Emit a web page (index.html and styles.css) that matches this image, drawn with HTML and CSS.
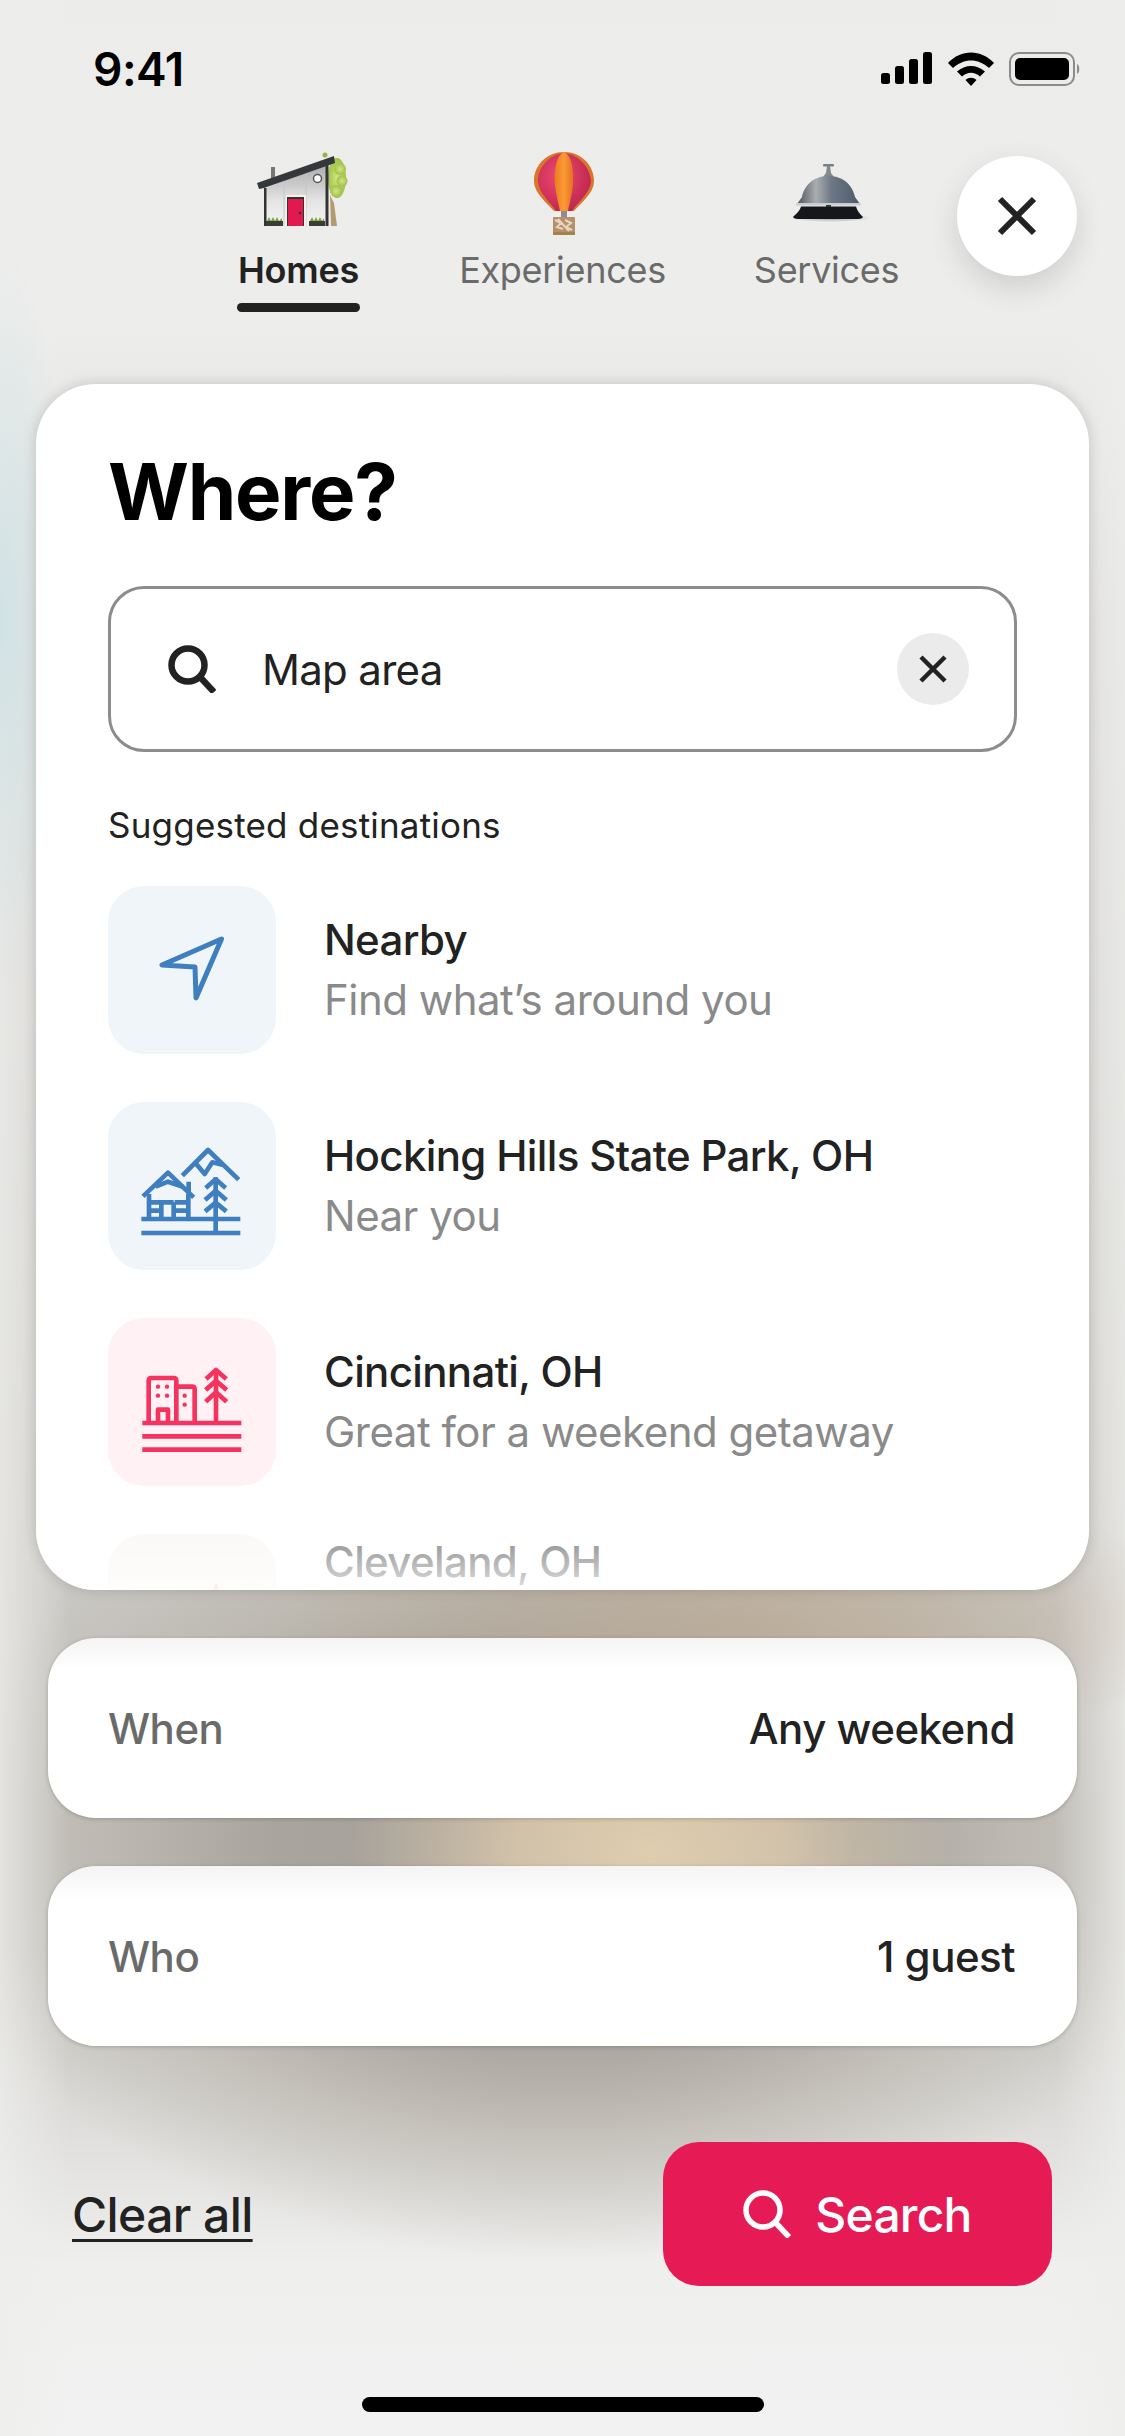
FILE: index.html
```html
<!DOCTYPE html>
<html lang="en">
<head>
<meta charset="utf-8">
<title>Where?</title>
<link rel="stylesheet" href="styles.css">
</head>
<body>
<div class="screen">
  <div class="status">
    <span class="time">9:41</span>
    <div class="status-icons">
      <svg width="52" height="32" viewBox="0 0 52 32"><g fill="#000"><rect x="0" y="21" width="9" height="11" rx="2.5"/><rect x="14" y="14" width="9" height="18" rx="2.5"/><rect x="28" y="7" width="9" height="25" rx="2.5"/><rect x="42" y="0" width="9" height="32" rx="2.5"/></g></svg>
      <svg width="46" height="34" viewBox="0 0 46 34"><path d="M0 11 C13 -3 33 -3 46 11 L41 16 C30 6 16 6 5 16Z M9 19.500 C17 12 29 12 37 19.500 L32 24.500 C26 19.500 20 19.500 14 24.500Z M17.500 28 C21 25 25 25 28.500 28 L23 34Z" fill="#000"/></svg>
      <svg width="72" height="34" viewBox="0 0 72 34"><rect x="1" y="1" width="64" height="32" rx="9" fill="none" stroke="#8b8b8b" stroke-width="2"/><rect x="6" y="6" width="54" height="22" rx="5" fill="#000"/><path d="M68 12 C71 13 71 21 68 22Z" fill="#8b8b8b"/></svg>
    </div>
  </div>

  <nav class="tabs">
    <div class="tab tab-active">
      <svg class="tab-art" viewBox="0 0 120 100">
        <defs>
          <linearGradient id="wall" x1="0" y1="0" x2="0" y2="1"><stop offset="0" stop-color="#a9a9ab"/><stop offset=".6" stop-color="#e4e4e4"/><stop offset="1" stop-color="#f4f4f4"/></linearGradient>
          <radialGradient id="leaf"><stop offset="0" stop-color="#d6e580"/><stop offset="1" stop-color="#9fc24c"/></radialGradient>
        </defs>
        <path d="M91 50 L92 81 L98 81 L95 58Z" fill="#b59a70"/>
        <g fill="url(#leaf)"><ellipse cx="98" cy="33" rx="9" ry="20"/><circle cx="101" cy="24" r="6"/><circle cx="103" cy="36" r="5.500"/><circle cx="97" cy="46" r="6"/></g>
        <circle cx="86" cy="10" r="2.500" fill="#8fb748"/>
        <rect x="32" y="22" width="4" height="12" fill="#777"/>
        <path d="M25 44 L89 18 L89 81 L25 81Z" fill="url(#wall)"/>
        <path d="M45 36 V81 M67 27 V81" stroke="#c6c6c6" stroke-width="1"/>
        <rect x="25" y="43" width="2.500" height="38" fill="#333"/>
        <rect x="86.500" y="18" width="3" height="63" fill="#333"/>
        <path d="M18 38 L95 11 L96 18 L25 43 L20 44Z" fill="#35383b"/>
        <rect x="47" y="50" width="20" height="31" fill="#f4f1ea"/>
        <rect x="48" y="52" width="17" height="29" fill="#333"/>
        <rect x="49" y="54" width="15" height="27" fill="#e01a4f"/>
        <circle cx="61" cy="68" r="1.200" fill="#222"/>
        <circle cx="78.500" cy="33.500" r="4" fill="#fff" stroke="#555" stroke-width="1.500"/>
        <rect x="27" y="76" width="17" height="5" fill="#3a3d35"/>
        <rect x="70" y="76" width="16" height="5" fill="#3a3d35"/>
        <path d="M28 76 L30 72 L32 76 L34 72 L36 76 L38 72 L40 76 L43 73 V76Z M71 76 L73 72 L75 76 L77 72 L79 76 L81 72 L83 76 L85 73 V76Z" fill="#79a33f"/>
      </svg>
      <span class="tab-label">Homes</span>
      <span class="tab-bar"></span>
    </div>
    <div class="tab">
      <svg class="tab-art" viewBox="0 0 120 100">
        <defs>
          <radialGradient id="red" cx=".4" cy=".4" r=".7"><stop offset="0" stop-color="#ee4a70"/><stop offset="1" stop-color="#b9224c"/></radialGradient>
          <linearGradient id="org" x1="0" y1="0" x2="1" y2="0"><stop offset="0" stop-color="#ec7d20"/><stop offset=".5" stop-color="#fb9a35"/><stop offset="1" stop-color="#e4711f"/></linearGradient>
        </defs>
        <path d="M61 7 C78 7 91 20 91 36 C91 48 78 58 71 66 L51 66 C44 58 31 48 31 36 C31 20 44 7 61 7Z" fill="#d9762a"/>
        <path d="M61 8 C74 9 87 21 88 36 C88 47 75 57 69 66 L53 66 C47 57 35 47 35 36 C35 21 48 9 61 8Z" fill="url(#red)"/>
        <path d="M61 7 C53 10 51 26 52 40 C53 50 56 60 57 66 L65 66 C66 60 69 50 70 40 C71 26 69 10 61 7Z" fill="url(#org)"/>
        <path d="M52 66 L70 66 L68 72 L53 72Z" fill="#f2eee8"/>
        <rect x="58" y="66" width="6" height="7" fill="#8d8d8d"/>
        <rect x="50" y="72" width="22" height="18" rx="1" fill="#b78f6c"/>
        <path d="M52 75 L58 78 L54 82 L60 84 M62 75 L68 78 L63 82 L69 85 M55 74 L66 86" stroke="#e8d5bd" stroke-width="2" fill="none"/>
        <rect x="50" y="87" width="22" height="3" fill="#a58248"/>
      </svg>
      <span class="tab-label">Experiences</span>
    </div>
    <div class="tab">
      <svg class="tab-art" viewBox="0 0 120 100">
        <defs>
          <linearGradient id="dome" x1="0" y1="0" x2="1" y2="0"><stop offset="0" stop-color="#4f555d"/><stop offset=".3" stop-color="#a9adb2"/><stop offset=".55" stop-color="#6d7884"/><stop offset="1" stop-color="#4b5a6b"/></linearGradient>
          <radialGradient id="bellshadow"><stop offset="0" stop-color="#000" stop-opacity=".35"/><stop offset="1" stop-color="#000" stop-opacity="0"/></radialGradient>
        </defs>
        <ellipse cx="64" cy="73" rx="40" ry="4" fill="url(#bellshadow)"/>
        <rect x="56" y="19" width="11" height="2.500" rx="1" fill="#7c7f83"/>
        <path d="M60 21 H63 L64 28 L67 32 H56 L59 28Z" fill="#85888c"/>
        <path d="M61.500 31 C78 31 86 42 88 52 L93 59 H30 L35 52 C37 42 45 31 61.500 31Z" fill="url(#dome)"/>
        <rect x="29" y="58" width="65" height="2.500" rx="1" fill="#c9cdd1"/>
        <path d="M34 61.500 H89 C90 66 93 69 96 72 C95 74 92 74 88 74 H34 C30 74 27 74 26 72 C29 69 33 66 34 61.500Z" fill="#15171a"/>
        <rect x="59" y="60" width="5" height="2" fill="#333"/>
      </svg>
      <span class="tab-label">Services</span>
    </div>
    <button class="close-btn" aria-label="Close">
      <svg width="42" height="42" viewBox="0 0 42 42"><path d="M4 4 L38 38 M38 4 L4 38" stroke="#222" stroke-width="6" fill="none"/></svg>
    </button>
  </nav>

  <section class="where-card">
    <h1 class="where-title">Where?</h1>
    <div class="where-input">
      <svg class="input-search" width="48" height="48" viewBox="0 0 48 48"><circle cx="20" cy="20" r="16.500" fill="none" stroke="#222" stroke-width="6.500"/><path d="M32 32 L46 47" stroke="#222" stroke-width="6.500" fill="none"/></svg>
      <span class="input-text">Map area</span>
      <span class="input-clear"><svg width="30" height="30" viewBox="0 0 30 30"><path d="M3 3 L27 27 M27 3 L3 27" stroke="#222" stroke-width="4.500" fill="none"/></svg></span>
    </div>
    <div class="suggested">Suggested destinations</div>
    <div class="dest-list">
      <div class="dest">
        <span class="dest-tile tile-blue">
          <svg width="168" height="168" viewBox="0 0 168 168"><path d="M113.500 53 L54 79 L87 81 L88 112Z" fill="none" stroke="#3f7fc0" stroke-width="5" stroke-linejoin="round"/></svg>
        </span>
        <div class="dest-text"><div class="dest-name">Nearby</div><div class="dest-sub">Find what’s around you</div></div>
      </div>
      <div class="dest">
        <span class="dest-tile tile-blue">
          <svg width="168" height="168" viewBox="55 64 504 504"><g fill="none" stroke="#3f7fc0" stroke-width="14" stroke-linejoin="round">
            <path d="M155 415 H452 M155 457 H452 M378 290 V457"/>
            <path d="M278 285 L355 208 L447 297"/>
            <path d="M318 248 L345 280 L368 245 L398 252"/>
            <path d="M348 322 L378 296 L408 322 M346 358 L378 330 L410 358 M346 392 L378 366 L410 392"/>
            <path d="M160 347 L235 276 L312 350"/>
            <path d="M198 318 L235 303 L280 318 M297 303 V335"/>
            <path d="M178 340 V412 M296 340 V412 M172 365 H215 M255 365 H302 M172 390 H215 M255 390 H302 M215 365 V412 M252 365 V412 M215 365 H252"/>
          </g></svg>
        </span>
        <div class="dest-text"><div class="dest-name">Hocking Hills State Park, OH</div><div class="dest-sub">Near you</div></div>
      </div>
      <div class="dest">
        <span class="dest-tile tile-pink">
          <svg width="168" height="168" viewBox="55 52 504 504"><g fill="none" stroke="#f5335f" stroke-width="14" stroke-linejoin="round">
            <path d="M158 367 H455 M158 407 H455 M158 447 H455"/>
            <path d="M177 367 V240 Q177 232 185 232 H252 Q260 232 260 240 V367"/>
            <path d="M260 258 H307 Q315 258 315 266 V367"/>
            <path d="M205 367 V327 H235 V367"/>
            <path d="M379 205 V367"/>
            <path d="M349 235 L379 208 L410 235 M348 268 L379 240 L411 268 M348 303 L379 275 L411 303"/>
          </g><g fill="#f5335f"><circle cx="205" cy="258" r="6.500"/><circle cx="232" cy="258" r="6.500"/><circle cx="205" cy="285" r="6.500"/><circle cx="232" cy="285" r="6.500"/><circle cx="285" cy="285" r="6.500"/><circle cx="285" cy="312" r="6.500"/></g></svg>
        </span>
        <div class="dest-text"><div class="dest-name">Cincinnati, OH</div><div class="dest-sub">Great for a weekend getaway</div></div>
      </div>
      <div class="dest dest-cut">
        <span class="dest-tile tile-sand">
          <svg width="168" height="168" viewBox="0 0 168 168"><path d="M104 58 L108 48 L112 58Z" fill="#cdb9ac"/></svg>
        </span>
        <div class="dest-text"><div class="dest-name">Cleveland, OH</div></div>
      </div>
    </div>
    <div class="where-fade"></div>
  </section>

  <div class="field"><span class="field-label">When</span><span class="field-value">Any weekend</span></div>
  <div class="field"><span class="field-label">Who</span><span class="field-value">1 guest</span></div>

  <footer class="actions">
    <a class="clear-all">Clear all</a>
    <button class="search-btn">
      <svg width="48" height="48" viewBox="0 0 48 48"><circle cx="20" cy="20" r="17" fill="none" stroke="#fff" stroke-width="5.500"/><path d="M32 32 L46 47" stroke="#fff" stroke-width="5.500" fill="none"/></svg>
      <span>Search</span>
    </button>
  </footer>
  <div class="home-wrap"><span class="home-bar"></span></div>
</div>
</body>
</html>
```

FILE: styles.css
```css
* { box-sizing: border-box; }
html, body { margin: 0; padding: 0; }
body { width: 1125px; height: 2436px; overflow: hidden; font-family: Inter, "Noto Sans", sans-serif; color: #222; }

.screen {
  position: relative;
  width: 1125px;
  height: 2436px;
  overflow: hidden;
  display: flex;
  flex-direction: column;
  background:
    radial-gradient(ellipse 300px 200px at 650px 1850px, #dfcdaf 0%, rgba(223,205,175,.75) 45%, rgba(223,205,175,0) 100%),
    radial-gradient(ellipse 500px 130px at 750px 1620px, rgba(190,170,145,.6) 0%, rgba(190,170,145,0) 100%),
    radial-gradient(ellipse 70px 380px at 0px 620px, rgba(205,225,228,.85) 0%, rgba(205,225,228,0) 100%),
    linear-gradient(90deg, rgba(238,238,236,.75) 0, rgba(238,238,236,0) 70px, rgba(238,238,236,0) 1055px, rgba(238,238,236,.75) 1125px),
    radial-gradient(ellipse 640px 410px at 560px 1850px, #a49e97 0%, #a9a49d 45%, rgba(180,175,165,.6) 70%, rgba(238,238,238,0) 100%),
    linear-gradient(180deg, #ececeb 0%, #ededec 13%, #dedddb 25%, #d2d1ce 50%, #c9c7c3 68%, #c9c7c3 80%, #efefee 93%, #f2f2f2 100%);
}

/* Status bar */
.status { height: 138px; padding: 52px 44px 0 93px; display: flex; justify-content: space-between; align-items: flex-start; }
.time { font-family: Inter, sans-serif; font-weight: 600; font-size: 46px; line-height: 34px; color: #000; letter-spacing: -0.5px; }
.status-icons { display: flex; gap: 15px; align-items: flex-start; }

/* Tabs */
.tabs { position: relative; height: 246px; display: grid; grid-template-columns: repeat(3, 264px); justify-content: center; align-items: start; padding-top: 7px; }
.tab { display: flex; flex-direction: column; align-items: center; color: #6a6a6a; }
.tab-art { width: 120px; height: 100px; display: block; }
.tab-label { height: 50px; font-size: 36px; line-height: 50px; font-weight: 400; letter-spacing: -0.3px; }
.tab-active { color: #222; }
.tab-active .tab-label { font-weight: 600; letter-spacing: -0.2px; }
.tab-bar { width: 123px; height: 9px; margin-top: 8px; border-radius: 5px; background: #222; }
.close-btn {
  position: absolute; left: 957px; top: 18px; width: 120px; height: 120px; padding: 0;
  border: 0; border-radius: 50%; background: #fff;
  box-shadow: 0 12px 30px rgba(0,0,0,.13);
  display: flex; align-items: center; justify-content: center;
}

/* Where card */
.where-card {
  position: relative;
  margin: 0 36px;
  height: 1206px;
  padding: 66px 72px 0;
  background: #fff;
  border-radius: 60px;
  overflow: hidden;
  box-shadow: 0 0 14px rgba(0,0,0,.16);
  flex: none;
}
.where-title { margin: 0; font-size: 78px; line-height: 84px; font-weight: 700; color: #000; letter-spacing: -1.2px; }
.where-input {
  margin-top: 52px;
  height: 166px;
  border: 3px solid #8c8c8c;
  border-radius: 36px;
  display: flex;
  align-items: center;
  padding: 0 45px 0 57px;
}
.input-search { flex: none; }
.input-text { margin-left: 46px; flex: 1; font-size: 42px; letter-spacing: -0.7px; color: #222; }
.input-clear { width: 72px; height: 72px; border-radius: 50%; background: #ebebeb; display: flex; align-items: center; justify-content: center; }
.suggested { margin-top: 48px; height: 50px; font-size: 35px; line-height: 50px; letter-spacing: 0.2px; color: #222; }
.dest-list { margin-top: 36px; display: flex; flex-direction: column; gap: 48px; }
.dest { display: flex; align-items: center; gap: 48px; height: 168px; flex: none; }
.dest-cut { align-items: flex-start; }
.dest-tile { width: 168px; height: 168px; border-radius: 36px; flex: none; display: block; }
.dest-tile svg { display: block; }
.tile-blue { background: #f0f5fa; }
.tile-pink { background: #fff1f4; }
.tile-sand { background: #f7f3ef; }
.dest-name { font-size: 42px; line-height: 56px; font-weight: 500; color: #222; letter-spacing: -0.65px; }
.dest-sub { margin-top: 4px; font-size: 42px; line-height: 56px; color: #8a8a8a; letter-spacing: -0.5px; }
.where-fade { position: absolute; left: 0; right: 0; bottom: 0; height: 100px; background: linear-gradient(180deg, rgba(255,255,255,.2), rgba(255,255,255,.85)); }

/* When / Who */
.field {
  margin: 48px 48px 0;
  height: 180px;
  padding: 0 62px 0 60px;
  flex: none;
  display: flex;
  align-items: center;
  justify-content: space-between;
  background: linear-gradient(180deg, #f4f4f4 0, #fff 34px);
  border-radius: 48px;
  box-shadow: 0 1px 4px rgba(0,0,0,.2);
  font-size: 42px;
  font-weight: 500;
}
.field-label { color: #6a6a6a; letter-spacing: -0.5px; }
.field-value { color: #222; letter-spacing: -0.5px; }

/* Actions */
.actions { margin-top: 96px; padding: 0 73px 0 72px; height: 144px; flex: none; display: flex; align-items: center; justify-content: space-between; }
.clear-all { font-size: 48px; font-weight: 500; color: #222; text-decoration: underline; text-underline-offset: 7px; text-decoration-thickness: 3px; letter-spacing: -0.6px; }
.search-btn {
  width: 389px; height: 144px; border: 0; border-radius: 36px; background: #e61a54;
  color: #fff; font: 500 48px Inter, sans-serif; letter-spacing: -0.8px;
  display: flex; align-items: center; justify-content: center; gap: 24px;
}

/* Home indicator */
.home-wrap { margin-top: 111px; display: flex; justify-content: center; }
.home-bar { width: 402px; height: 15px; border-radius: 8px; background: #000; }
```
